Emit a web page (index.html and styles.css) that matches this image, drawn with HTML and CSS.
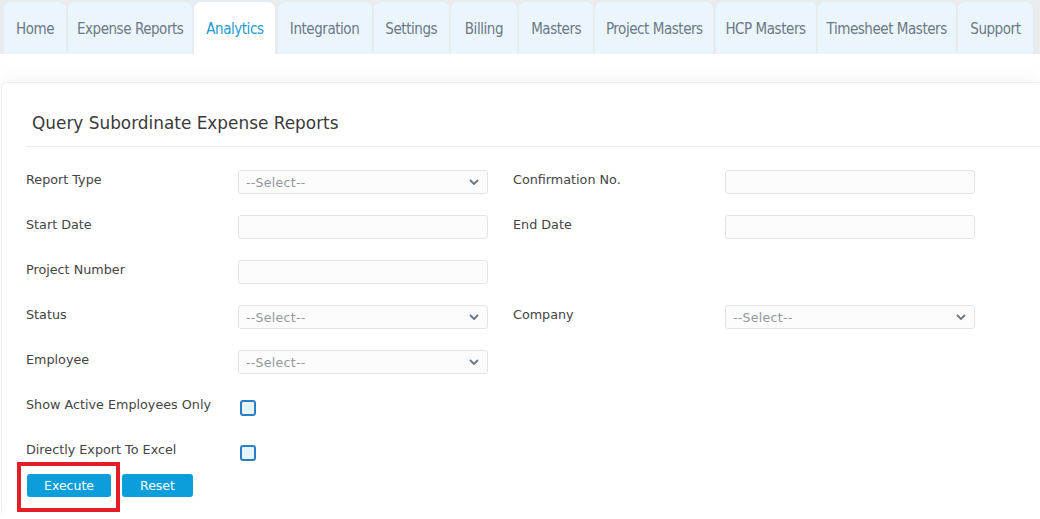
FILE: index.html
```html
<!DOCTYPE html>
<html>
<head>
<meta charset="utf-8">
<link rel="stylesheet" href="styles.css">
</head>
<body>
<nav class="tabs">
  <a class="tab t-home">Home</a>
  <a class="tab t-exp">Expense Reports</a>
  <a class="tab t-ana active">Analytics</a>
  <a class="tab t-int">Integration</a>
  <a class="tab t-set">Settings</a>
  <a class="tab t-bill">Billing</a>
  <a class="tab t-mast">Masters</a>
  <a class="tab t-proj">Project Masters</a>
  <a class="tab t-hcp">HCP Masters</a>
  <a class="tab t-time">Timesheet Masters</a>
  <a class="tab t-sup">Support</a>
</nav>
<main class="page">
  <section class="card">
    <h2 class="title">Query Subordinate Expense Reports</h2>
    <div class="form">
      <div class="row">
        <label class="lbl">Report Type</label>
        <div class="select"><span>--Select--</span><svg viewBox="0 0 10 6" class="chev"><path d="M1 1l4 4 4-4" /></svg></div>
        <label class="lbl col3">Confirmation No.</label>
        <div class="input"></div>
      </div>
      <div class="row">
        <label class="lbl">Start Date</label>
        <div class="input"></div>
        <label class="lbl col3">End Date</label>
        <div class="input"></div>
      </div>
      <div class="row">
        <label class="lbl">Project Number</label>
        <div class="input"></div>
      </div>
      <div class="row">
        <label class="lbl">Status</label>
        <div class="select"><span>--Select--</span><svg viewBox="0 0 10 6" class="chev"><path d="M1 1l4 4 4-4" /></svg></div>
        <label class="lbl col3">Company</label>
        <div class="select"><span>--Select--</span><svg viewBox="0 0 10 6" class="chev"><path d="M1 1l4 4 4-4" /></svg></div>
      </div>
      <div class="row">
        <label class="lbl">Employee</label>
        <div class="select"><span>--Select--</span><svg viewBox="0 0 10 6" class="chev"><path d="M1 1l4 4 4-4" /></svg></div>
      </div>
    </div>
    <div class="checks">
      <div class="check-row">
        <label class="lbl">Show Active Employees Only</label>
        <span class="box"></span>
      </div>
      <div class="check-row second">
        <label class="lbl">Directly Export To Excel</label>
        <span class="box"></span>
      </div>
    </div>
    <div class="actions">
      <button class="btn exec">Execute</button>
      <button class="btn reset">Reset</button>
      <span class="highlight"></span>
    </div>
  </section>
</main>
</body>
</html>
```
FILE: styles.css
```css
html, body {
  margin: 0;
  padding: 0;
  background: #ffffff;
  font-family: "DejaVu Sans", "Noto Sans", sans-serif;
  overflow: hidden;
}
.tabs {
  display: flex;
  gap: 2.2px;
  height: 54px;
  padding: 2px 0 0 4px;
  box-sizing: border-box;
  background: #e9ecef;
  align-items: stretch;
}
.tab {
  display: flex;
  align-items: center;
  justify-content: center;
  background: #eaf6fc;
  border-radius: 7px 7px 0 0;
  color: #6c7886;
  font-family: "DejaVu Sans Condensed", "DejaVu Sans", sans-serif;
  font-stretch: condensed;
  font-size: 15px;
  letter-spacing: -0.45px;
  white-space: nowrap;
  padding-top: 2px;
  flex: none;
}
.t-home { width: 62px; }
.t-exp { width: 124px; }
.t-ana { width: 81px; }
.t-int { width: 94px; }
.t-set { width: 75px; }
.t-bill { width: 66px; }
.t-mast { width: 74px; }
.t-proj { width: 118px; }
.t-hcp { width: 100px; }
.t-time { width: 138px; }
.t-sup { width: 75px; }
.tab.active {
  background: #ffffff;
  color: #1d9ad6;
}
.page {
  padding: 28px 0 0 1px;
}
.card {
  background: #fff;
  border-top: 1px solid #eeeeee;
  border-left: 1px solid #eeeeee;
  border-radius: 6px 0 0 0;
  box-shadow: 0 -6px 16px rgba(0, 0, 0, 0.035);
  padding: 0 0 10px 24px;
  min-height: 420px;
}
.title {
  margin: 0;
  padding: 30px 0 13px 6px;
  font-size: 16.9px;
  font-weight: 500;
  color: #3a3a3a;
  border-bottom: 1px solid #eeeeee;
}
.form {
  display: flex;
  flex-direction: column;
  gap: 21px;
  margin-top: 23px;
}
.row {
  display: grid;
  grid-template-columns: 212px 250px 237px 250px;
  height: 24px;
}
.lbl {
  font-size: 12.75px;
  color: #444;
  align-self: center;
  margin-top: -5px;
  white-space: nowrap;
}
.col3 {
  padding-left: 25px;
}
.input, .select {
  height: 24px;
  box-sizing: border-box;
  border: 1px solid #e4e4e4;
  border-radius: 3px;
  background: #fcfcfc;
}
.select {
  display: flex;
  align-items: center;
  justify-content: space-between;
  padding: 0 8px 0 7px;
  font-size: 12.5px;
  letter-spacing: 0.3px;
  color: #92979d;
}
.chev {
  width: 10px;
  height: 6px;
  fill: none;
  stroke: #6b7580;
  stroke-width: 1.8;
}
.checks {
  display: flex;
  flex-direction: column;
  margin-top: 23px;
}
.check-row {
  display: grid;
  grid-template-columns: 214px 16px;
  align-items: center;
  height: 18px;
}
.check-row.second {
  margin-top: 27px;
}
.box {
  width: 16px;
  height: 16px;
  box-sizing: border-box;
  border: 2px solid #2a7fc3;
  border-radius: 3px;
  background: #e8f4fc;
  margin-top: 3px;
}
.actions {
  display: flex;
  gap: 11px;
  margin-top: 14px;
  padding-left: 1px;
  position: relative;
}
.btn {
  height: 23px;
  border: none;
  border-radius: 3px;
  background: #0c9ddb;
  color: #fff;
  font-family: "DejaVu Sans", sans-serif;
  font-size: 12.5px;
  padding: 0;
}
.btn.exec { width: 84px; }
.btn.reset { width: 71px; }
.highlight {
  position: absolute;
  left: -9px;
  top: -12px;
  width: 103px;
  height: 50px;
  box-sizing: border-box;
  border: 4px solid #e41e26;
  pointer-events: none;
}
```
